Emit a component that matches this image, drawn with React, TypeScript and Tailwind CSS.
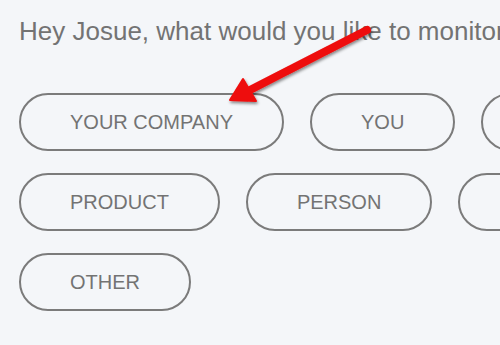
import React from "react";

const rows: string[][] = [
  ["YOUR COMPANY", "YOU", "COMPETITOR"],
  ["PRODUCT", "PERSON", "TOPIC"],
  ["OTHER"],
];

function Choice({ label }: { label: string }) {
  return (
    <button
      type="button"
      className="h-[58px] shrink-0 rounded-full border-2 border-[#7b7b7b] bg-transparent px-[49px] text-[20px] leading-none text-[#737373] flex items-center justify-center"
    >
      {label}
    </button>
  );
}

function Arrow() {
  return (
    <svg
      className="pointer-events-none absolute left-0 top-0"
      width="500"
      height="345"
      viewBox="0 0 500 345"
    >
      <defs>
        <filter id="shadow" x="-20%" y="-20%" width="140%" height="140%">
          <feDropShadow dx="1" dy="2" stdDeviation="1.5" floodColor="#000" floodOpacity="0.45" />
        </filter>
      </defs>
      <g filter="url(#shadow)">
        <line x1="367" y1="30" x2="248" y2="91" stroke="#ee0a0a" strokeWidth="8" strokeLinecap="round" />
        <polygon points="230,100 243,79 256,101" fill="#ee0a0a" stroke="#ee0a0a" strokeWidth="2" strokeLinejoin="round" />
      </g>
    </svg>
  );
}

export default function App() {
  return (
    <div
      className="relative h-[345px] w-[500px] overflow-hidden bg-[#f4f6f9] px-[19px] pt-[16px]"
      style={{ fontFamily: '"Liberation Sans", Arial, sans-serif' }}
    >
      <h1 className="whitespace-nowrap text-[26px] font-normal leading-[30px] text-[#737373]">
        Hey Josue, what would you like to monitor?
      </h1>
      <div className="mt-[47px] flex flex-col gap-[22px]">
        {rows.map((row, i) => (
          <div key={i} className="flex gap-[26px]">
            {row.map((label) => (
              <Choice key={label} label={label} />
            ))}
          </div>
        ))}
      </div>
      <Arrow />
    </div>
  );
}
